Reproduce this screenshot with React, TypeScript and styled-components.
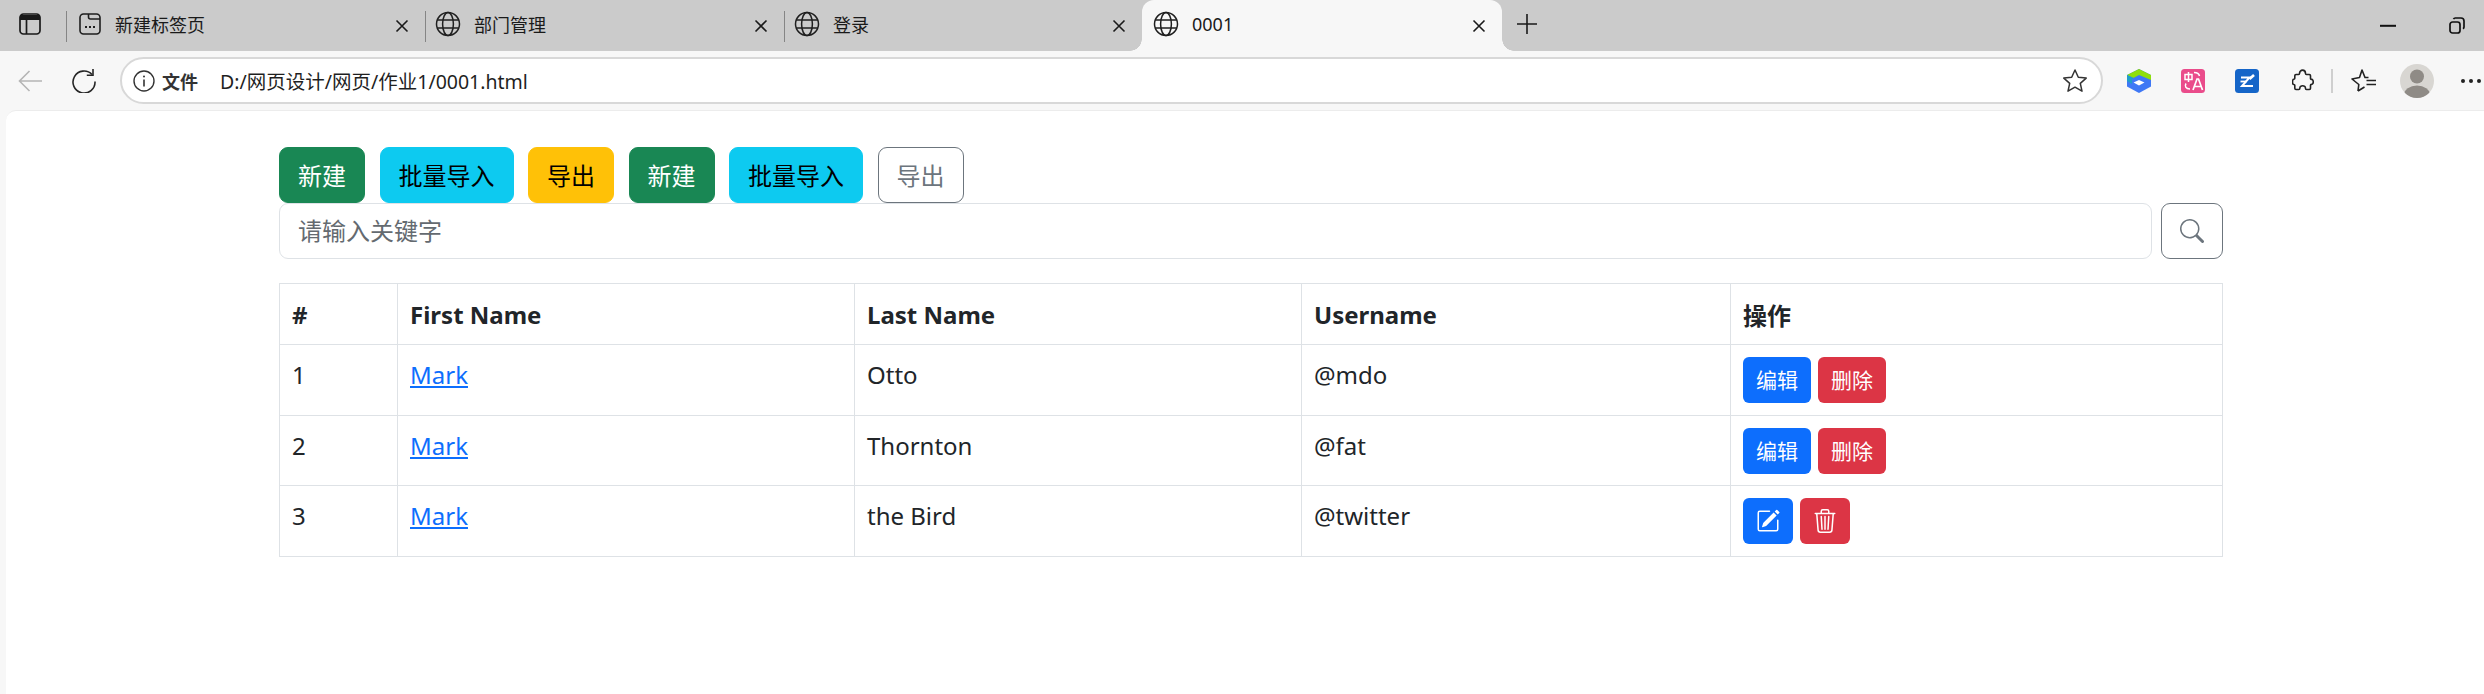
import { createGlobalStyle } from 'styled-components';
import styled from 'styled-components';
import { BsPencilSquare, BsSearch, BsTrash3 } from 'react-icons/bs';

const FONT = '"Noto Sans", "Noto Sans CJK SC", sans-serif';

const GlobalStyle = createGlobalStyle`
  * {
    box-sizing: border-box;
  }

  html, body {
    margin: 0;
    padding: 0;
    overflow: hidden;
    background: #f7f7f7;
  }

  body {
    font-family: ${FONT};
  }
`;

const GlobeIcon = () => (
  <svg width="26" height="26" viewBox="0 0 26 26" fill="none" stroke="#1f1f1f" strokeWidth="1.5">
    <circle cx="13" cy="13" r="11.5" />
    <ellipse cx="13" cy="13" rx="5.4" ry="11.5" />
    <path d="M2.4 9h21.2M2.4 17h21.2" />
  </svg>
);

const NewTabIcon = () => (
  <svg width="22" height="22" viewBox="0 0 22 22" fill="none" stroke="#1f1f1f" strokeWidth="1.6">
    <rect x="1" y="1" width="20" height="20" rx="3.5" />
    <path d="M9.5 1v3a2 2 0 0 0 2 2H21" />
    <path d="M6 14h2M10 14h2M14 14h2" strokeWidth="2" />
  </svg>
);

const CloseIcon = () => (
  <svg width="14" height="14" viewBox="0 0 14 14" fill="none" stroke="#1a1a1a" strokeWidth="1.6">
    <path d="M1.5 1.5l11 11M12.5 1.5l-11 11" />
  </svg>
);

const SidebarIcon = () => (
  <svg width="22" height="22" viewBox="0 0 22 22" fill="none" stroke="#1a1a1a" strokeWidth="1.7">
    <rect x="1" y="1" width="20" height="20" rx="3.5" />
    <path d="M1 4.500h20" strokeWidth="5" />
    <path d="M7.500 6v15" />
  </svg>
);

const PlusIcon = () => (
  <svg width="22" height="22" viewBox="0 0 22 22" fill="none" stroke="#1a1a1a" strokeWidth="1.6">
    <path d="M11 1v20M1 11h20" />
  </svg>
);

const MinimizeIcon = () => (
  <svg width="16" height="4" viewBox="0 0 16 4">
    <rect y="0.8" width="16" height="2" fill="#111" />
  </svg>
);

const RestoreIcon = () => (
  <svg width="16" height="17" viewBox="0 0 16 17" fill="none" stroke="#111" strokeWidth="1.7">
    <rect x="1" y="5" width="10" height="11" rx="2.5" />
    <path d="M4.5 2.2A2 2 0 0 1 6.5 1H12a3 3 0 0 1 3 3v6a2 2 0 0 1-1 1.8" />
  </svg>
);

const BackIcon = () => (
  <svg width="24" height="22" viewBox="0 0 24 22" fill="none" stroke="#b5b5b5" strokeWidth="1.6">
    <path d="M24 11H1.500M11.500 1L1.500 11l10 10" />
  </svg>
);

const ReloadIcon = () => (
  <svg width="24" height="24" viewBox="0 0 24 24" fill="none" stroke="#262626" strokeWidth="1.6">
    <path d="M20 5.500A11 11 0 1 0 23 12.500" />
    <path d="M21 0v6.200h-6.200" />
  </svg>
);

const InfoIcon = () => (
  <svg width="22" height="22" viewBox="0 0 22 22" fill="none" stroke="#333" strokeWidth="1.4">
    <circle cx="11" cy="11" r="10" />
    <path d="M11 9.5v7" strokeWidth="1.6" />
    <circle cx="11" cy="6.4" r="1" fill="#333" stroke="none" />
  </svg>
);

const StarIcon = () => (
  <svg width="26" height="26" viewBox="0 0 26 26" fill="none" stroke="#333" strokeWidth="1.5" strokeLinejoin="round">
    <path d="M13 2l3.3 7.2 7.9.9-5.9 5.3 1.7 7.8L13 19.2l-7 4 1.7-7.8-5.9-5.3 7.9-.9z" />
  </svg>
);

const CubeExtIcon = () => (
  <svg width="24" height="24" viewBox="0 0 24 24">
    <path d="M12 0l12 6v11.500L12 24 0 17.500V6z" fill="#3f78f5" />
    <path d="M12 0l12 6v5L12 6 6.500 9 0 6z" fill="#8fdf0a" />
    <path d="M0 6l6.500 3L12 6l-7 4v5L0 12z" fill="#1f9fc8" />
    <path d="M6.500 13.500L12 11l5.500 2.500L12 16.500z" fill="#fff" />
  </svg>
);

const TranslateExtIcon = () => (
  <svg width="24" height="24" viewBox="0 0 24 24">
    <rect width="24" height="24" rx="3.5" fill="#ea4c8b" />
    <path d="M4 5.500h7v5H4zM7.500 3v10" fill="none" stroke="#fff" strokeWidth="1.5" />
    <path d="M5 14.500c-1.500 2.500-.5 5.500 4 5.500" fill="none" stroke="#fff" strokeWidth="1.5" />
    <path d="M13 3.500c3 0 5 1 5.500 3.500" fill="none" stroke="#fff" strokeWidth="1.5" />
    <path d="M12 21l4-11h1.500l4 11M13.500 17.500h6.500" fill="none" stroke="#fff" strokeWidth="1.7" />
  </svg>
);

const NoteExtIcon = () => (
  <svg width="24" height="24" viewBox="0 0 24 24">
    <rect width="24" height="24" rx="3.5" fill="#1565c8" />
    <path d="M6 8.500h8.500L7 17h11" fill="none" stroke="#fff" strokeWidth="2" />
    <path d="M5.500 12.500h6" stroke="#fff" strokeWidth="1.8" />
    <path d="M14.500 10l4.500-4" stroke="#fff" strokeWidth="2.600" />
  </svg>
);

const PuzzleIcon = () => (
  <svg width="22" height="24" viewBox="0 0 22 24" fill="none" stroke="#222" strokeWidth="1.6" strokeLinejoin="round">
    <path d="M7.500 4.500c0-4.500 6-4.500 6 0 0 .6.300 1 1 1h2.800c.8 0 1.200.4 1.200 1.200v2.800c0 .6.400 1 1 .9 2.300-.3 2.300 5.200 0 5-.6 0-1 .3-1 .9v3c0 .8-.4 1.200-1.200 1.200h-2.800c-.7 0-1-.4-1-1 .1-3.600-5.800-3.600-5.700 0 0 .6-.4 1-1 1H4c-.8 0-1.200-.4-1.200-1.200v-2.800c0-.7-.4-1-1-1-1.700 0-1.700-5.200 0-5.200.6 0 1-.3 1-1V6.700c0-.8.400-1.200 1.200-1.200h2.500c.7 0 1-.4 1-1z" />
  </svg>
);

const FavoritesIcon = () => (
  <svg width="25" height="23" viewBox="0 0 25 23" fill="none" stroke="#222" strokeWidth="1.6" strokeLinejoin="round">
    <path d="M7 22l.8-6.500L1 10l7.500-1.500L11 1l3 7.500h3.500M13.500 18L7 22" />
    <path d="M15.500 11.500H25M15.500 15.500H25" />
  </svg>
);

const AvatarIcon = () => (
  <svg width="34" height="34" viewBox="0 0 34 34">
    <defs>
      <clipPath id="avatar-clip">
        <circle cx="17" cy="17" r="17" />
      </clipPath>
    </defs>
    <circle cx="17" cy="17" r="17" fill="#d8d6d2" />
    <circle cx="17" cy="12.500" r="7" fill="#8f8b86" />
    <ellipse cx="17" cy="31" rx="13" ry="9.500" fill="#8f8b86" clipPath="url(#avatar-clip)" />
  </svg>
);

const tabs = [
  { title: '新建标签页', width: 359, inset: 3, icon: <NewTabIcon /> },
  { title: '部门管理', width: 359, inset: 0, icon: <GlobeIcon /> },
  { title: '登录', width: 358, inset: 0, icon: <GlobeIcon /> },
];

const rows = [
  { id: 1, first: 'Mark', last: 'Otto', user: '@mdo', icons: false },
  { id: 2, first: 'Mark', last: 'Thornton', user: '@fat', icons: false },
  { id: 3, first: 'Mark', last: 'the Bird', user: '@twitter', icons: true },
];

const App = () => (
  <Window>
    <GlobalStyle />
    <TabStrip>
      <SidebarSlot>
        <SidebarIcon />
      </SidebarSlot>
      {tabs.map(tab => (
        <Tab key={tab.title} $width={tab.width}>
          <TabIcon $inset={tab.inset}>{tab.icon}</TabIcon>
          <TabTitle>{tab.title}</TabTitle>
          <CloseIcon />
        </Tab>
      ))}
      <ActiveTab>
        <TabIcon>
          <GlobeIcon />
        </TabIcon>
        <TabTitle>0001</TabTitle>
        <CloseIcon />
      </ActiveTab>
      <NewTabSlot>
        <PlusIcon />
      </NewTabSlot>
      <WindowControls>
        <MinimizeIcon />
        <RestoreIcon />
      </WindowControls>
    </TabStrip>

    <Toolbar>
      <BackIcon />
      <ReloadSlot>
        <ReloadIcon />
      </ReloadSlot>
      <AddressBar>
        <InfoIcon />
        <Scheme>文件</Scheme>
        <Url>D:/网页设计/网页/作业1/0001.html</Url>
        <StarIcon />
      </AddressBar>
      <Extensions>
        <ExtSlot $width={54}>
          <CubeExtIcon />
        </ExtSlot>
        <ExtSlot $width={54}>
          <TranslateExtIcon />
        </ExtSlot>
        <ExtSlot $width={54}>
          <NoteExtIcon />
        </ExtSlot>
        <ExtSlot $width={57}>
          <PuzzleIcon />
        </ExtSlot>
        <ToolbarDivider />
        <ExtSlot $width={61}>
          <FavoritesIcon />
        </ExtSlot>
        <ExtSlot $width={46}>
          <AvatarIcon />
        </ExtSlot>
        <Dots>
          <i />
          <i />
          <i />
        </Dots>
      </Extensions>
    </Toolbar>

    <Page>
      <Container>
        <ButtonRow>
          <Button $bg="#198754" $fg="#fff">新建</Button>
          <Button $bg="#0dcaf0" $fg="#000">批量导入</Button>
          <Button $bg="#ffc107" $fg="#000">导出</Button>
          <Button $bg="#198754" $fg="#fff">新建</Button>
          <Button $bg="#0dcaf0" $fg="#000">批量导入</Button>
          <OutlineButton>导出</OutlineButton>
        </ButtonRow>
        <SearchRow>
          <SearchInput placeholder="请输入关键字" />
          <SearchButton>
            <BsSearch size={24} />
          </SearchButton>
        </SearchRow>
        <Table>
          <colgroup>
            <col style={{ width: 118 }} />
            <col style={{ width: 457 }} />
            <col style={{ width: 447 }} />
            <col style={{ width: 429 }} />
            <col />
          </colgroup>
          <thead>
            <tr>
              <Th>#</Th>
              <Th>First Name</Th>
              <Th>Last Name</Th>
              <Th>Username</Th>
              <Th>操作</Th>
            </tr>
          </thead>
          <tbody>
            {rows.map(row => (
              <Row key={row.id}>
                <Td>{row.id}</Td>
                <Td>
                  <NameLink href="#">{row.first}</NameLink>
                </Td>
                <Td>{row.last}</Td>
                <Td>{row.user}</Td>
                <Td>
                  <Actions>
                    {row.icons ? (
                      <>
                        <SmallButton $bg="#0d6efd" $icon>
                          <BsPencilSquare size={24} />
                        </SmallButton>
                        <SmallButton $bg="#dc3545" $icon>
                          <BsTrash3 size={24} />
                        </SmallButton>
                      </>
                    ) : (
                      <>
                        <SmallButton $bg="#0d6efd">编辑</SmallButton>
                        <SmallButton $bg="#dc3545">删除</SmallButton>
                      </>
                    )}
                  </Actions>
                </Td>
              </Row>
            ))}
          </tbody>
        </Table>
      </Container>
    </Page>
  </Window>
);

const Window = styled.div`
  width: 2484px;
  height: 694px;
  display: flex;
  flex-direction: column;
  background: #f7f7f7;
`;

const TabStrip = styled.div`
  height: 51px;
  display: flex;
  background: #cbcbcb;
`;

const SidebarSlot = styled.div`
  width: 66px;
  padding: 0 0 4px 19px;
  display: flex;
  align-items: center;
`;

const Tab = styled.div<{ $width: number }>`
  width: ${props => props.$width}px;
  position: relative;
  display: flex;
  align-items: center;
  padding: 0 16px 0 10px;
  color: #1a1a1a;

  &::before {
    content: '';
    position: absolute;
    left: 0;
    top: 11px;
    bottom: 9px;
    width: 1px;
    background: #858585;
  }
`;

const ActiveTab = styled(Tab).attrs({ $width: 360 })`
  padding-left: 11px;
  background: #f7f7f7;
  border-radius: 12px 12px 0 0;

  &::before,
  &::after {
    content: '';
    position: absolute;
    top: auto;
    bottom: 0;
    width: 12px;
    height: 12px;
  }

  &::before {
    left: -12px;
    background: radial-gradient(circle at 0 0, transparent 11.5px, #f7f7f7 12px);
  }

  &::after {
    right: -12px;
    background: radial-gradient(circle at 100% 0, transparent 11.5px, #f7f7f7 12px);
  }
`;

const TabIcon = styled.span<{ $inset?: number }>`
  width: 39px;
  display: flex;
  align-items: center;
  padding: 0 0 3px ${props => props.$inset ?? 0}px;
`;

const TabTitle = styled.span`
  flex: 1;
  padding-bottom: 3px;
  font-size: 18px;
  color: #1a1a1a;
`;

const NewTabSlot = styled.div`
  width: 50px;
  padding: 0 0 4px 14px;
  display: flex;
  align-items: center;
`;

const WindowControls = styled.div`
  flex: 1;
  display: flex;
  align-items: center;
  justify-content: flex-end;
  gap: 53px;
  padding-right: 19px;
`;

const Toolbar = styled.div`
  height: 59px;
  display: flex;
  align-items: center;
  padding-left: 18px;
  background: #f7f7f7;
`;

const ReloadSlot = styled.div`
  margin-left: 30px;
  display: flex;
`;

const AddressBar = styled.div`
  width: 1983px;
  height: 47px;
  margin: 0 0 0 24px;
  padding: 0 13px 0 11px;
  display: flex;
  align-items: center;
  border: 2px solid #d8d8d8;
  border-radius: 24px;
  background: #fff;
`;

const Scheme = styled.span`
  width: 58px;
  margin-left: 7px;
  font-size: 18px;
  font-weight: 700;
  color: #333;
`;

const Url = styled.span`
  flex: 1;
  font-size: 19.500px;
  color: #1f1f1f;
`;

const Extensions = styled.div`
  flex: 1;
  display: flex;
  align-items: center;
  padding-left: 9px;
`;

const ExtSlot = styled.div<{ $width: number }>`
  width: ${props => props.$width}px;
  flex: none;
  display: flex;
  align-items: center;
  justify-content: center;
`;

const ToolbarDivider = styled.div`
  width: 2px;
  height: 24px;
  flex: none;
  background: #cfcfcf;
`;

const Dots = styled.div`
  display: flex;
  gap: 4px;
  margin-left: 21px;

  i {
    width: 4px;
    height: 4px;
    border-radius: 50%;
    background: #222;
  }
`;

const Page = styled.div`
  flex: 1;
  margin-left: 6px;
  border-top: 1px solid #ececec;
  border-radius: 10px 0 0 0;
  background: #fff;
`;

const Container = styled.div`
  width: 1944px;
  margin-left: 273px;
  padding-top: 36px;
`;

const ButtonRow = styled.div`
  display: flex;
  gap: 14.500px;
`;

const Button = styled.button<{ $bg: string; $fg: string }>`
  height: 56px;
  padding: 0 18px 2px;
  border: 1.500px solid ${props => props.$bg};
  border-radius: 9px;
  background: ${props => props.$bg};
  color: ${props => props.$fg};
  font-family: ${FONT};
  font-size: 24px;
`;

const OutlineButton = styled(Button).attrs({ $bg: '#fff', $fg: '#6c757d' })`
  border-color: #6c757d;
`;

const SearchRow = styled.div`
  display: flex;
  gap: 9px;
`;

const SearchInput = styled.input`
  flex: 1;
  height: 56px;
  padding: 0 18px 2px;
  border: 1.500px solid #dee2e6;
  border-radius: 9px;
  outline: none;
  font-family: ${FONT};
  font-size: 24px;

  &::placeholder {
    color: #646a70;
  }
`;

const SearchButton = styled.button`
  width: 62px;
  height: 56px;
  display: flex;
  align-items: center;
  justify-content: center;
  border: 1.500px solid #6c757d;
  border-radius: 9px;
  background: #fff;
  color: #6c757d;
`;

const Table = styled.table`
  width: 100%;
  margin-top: 24px;
  table-layout: fixed;
  border-collapse: collapse;
  color: #212529;
  font-size: 24px;
`;

const Th = styled.th`
  height: 61px;
  padding: 0 12px;
  border: 1.500px solid #dee2e6;
  text-align: left;
  font-weight: 700;
`;

const Td = styled.td`
  padding: 12px;
  border: 1.500px solid #dee2e6;
  vertical-align: top;
  line-height: 36px;
`;

const Row = styled.tr`
  &:nth-child(2) ${Td} {
    padding-bottom: 11px;
  }
`;

const NameLink = styled.a`
  color: #0d6efd;
  text-decoration: underline;
`;

const Actions = styled.div`
  display: flex;
  gap: 7px;
`;

const SmallButton = styled.button<{ $bg: string; $icon?: boolean }>`
  width: ${props => (props.$icon ? 50 : 68)}px;
  height: 46px;
  display: flex;
  align-items: center;
  justify-content: center;
  padding: 0 0 ${props => (props.$icon ? 0 : 2)}px;
  border: none;
  border-radius: 6px;
  background: ${props => props.$bg};
  color: #fff;
  font-family: ${FONT};
  font-size: 21px;
`;

export default App;
